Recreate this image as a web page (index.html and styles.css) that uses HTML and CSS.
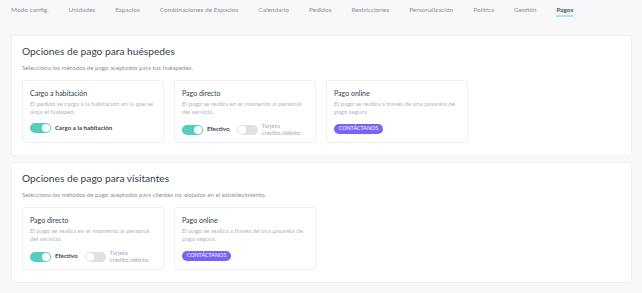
FILE: index.html
```html
<!DOCTYPE html>
<html lang="es">
<head>
<meta charset="utf-8">
<link rel="stylesheet" href="styles.css">
</head>
<body>
<nav class="tabs">
  <a class="tab">Modo config.</a>
  <a class="tab">Unidades</a>
  <a class="tab">Espacios</a>
  <a class="tab">Combinaciones de Espacios</a>
  <a class="tab">Calendario</a>
  <a class="tab">Pedidos</a>
  <a class="tab">Restricciones</a>
  <a class="tab">Personalización</a>
  <a class="tab">Política</a>
  <a class="tab">Gestión</a>
  <a class="tab active">Pagos</a>
</nav>
<main class="content">
  <section class="panel">
    <h2 class="panel-title">Opciones de pago para huéspedes</h2>
    <p class="panel-sub">Selecciona los métodos de pago aceptados para tus huéspedes.</p>
    <div class="cards">
      <div class="card">
        <h3 class="card-title">Cargo a habitación</h3>
        <p class="card-desc">El pedido se carga a la habitación en la que se aloja el huésped.</p>
        <div class="options">
          <div class="opt"><span class="toggle on"></span><span class="opt-label">Cargo a la habitación</span></div>
        </div>
      </div>
      <div class="card">
        <h3 class="card-title">Pago directo</h3>
        <p class="card-desc">El pago se realiza en el momento al personal del servicio.</p>
        <div class="options">
          <div class="opt"><span class="toggle on"></span><span class="opt-label">Efectivo</span></div>
          <div class="opt"><span class="toggle"></span><span class="opt-label off">Tarjeta<br>crédito/débito</span></div>
        </div>
      </div>
      <div class="card">
        <h3 class="card-title">Pago online</h3>
        <p class="card-desc">El pago se realiza a través de una pasarela de pago segura.</p>
        <div class="options">
          <button class="btn">CONTÁCTANOS</button>
        </div>
      </div>
    </div>
  </section>
  <section class="panel">
    <h2 class="panel-title">Opciones de pago para visitantes</h2>
    <p class="panel-sub">Selecciona los métodos de pago aceptados para clientes no alojados en el establecimiento.</p>
    <div class="cards">
      <div class="card">
        <h3 class="card-title">Pago directo</h3>
        <p class="card-desc">El pago se realiza en el momento al personal del servicio.</p>
        <div class="options">
          <div class="opt"><span class="toggle on"></span><span class="opt-label">Efectivo</span></div>
          <div class="opt"><span class="toggle"></span><span class="opt-label off">Tarjeta<br>crédito/débito</span></div>
        </div>
      </div>
      <div class="card">
        <h3 class="card-title">Pago online</h3>
        <p class="card-desc">El pago se realiza a través de una pasarela de pago segura.</p>
        <div class="options">
          <button class="btn">CONTÁCTANOS</button>
        </div>
      </div>
    </div>
  </section>
</main>
</body>
</html>
```
FILE: styles.css
```css
* { box-sizing: border-box; }
html, body { margin: 0; padding: 0; }
body {
  background: #f7f8fa;
  font-family: Lato, "Noto Sans", sans-serif;
  color: #3d4455;
  width: 642px;
  height: 293px;
  overflow: hidden;
}
.tabs {
  display: flex;
  gap: 20px;
  padding: 5px 11px 0;
  height: 35px;
}
.tab {
  font-size: 6.5px;
  color: #8b90a0;
  line-height: 8px;
  height: 12px;
  padding-top: 1px;
  white-space: nowrap;
}
.tab.active {
  color: #3d4455;
  font-weight: 600;
  border-bottom: 2px solid #a6ebea;
}
.content {
  display: flex;
  flex-direction: column;
  gap: 6px;
  padding: 0 10px 0 11px;
}
.panel {
  background: #fff;
  border: 1px solid #f0f1f4;
  border-radius: 2px;
  padding: 8px 10px 0;
  height: 121px;
}
.panel-title {
  margin: 0;
  font-size: 10.2px;
  font-weight: 400;
  line-height: 14px;
  color: #363d4e;
}
.panel-sub {
  margin: 5px 0 0;
  font-size: 6.2px;
  line-height: 9px;
  color: #8b90a0;
}
.cards {
  display: flex;
  gap: 10px;
  margin-top: 8px;
}
.card {
  width: 142px;
  height: 63px;
  border: 1px solid #eef0f3;
  border-radius: 3px;
  padding: 7px 7px 0;
}
.card-title {
  margin: 0;
  font-size: 7px;
  font-weight: 400;
  line-height: 10px;
  color: #363d4e;
}
.card-desc {
  margin: 2px 0 0;
  font-size: 6.2px;
  line-height: 8px;
  color: #b2b6c3;
}
.options {
  display: flex;
  align-items: center;
  gap: 7px;
  margin-top: 7px;
}
.opt {
  display: flex;
  align-items: center;
  gap: 4px;
}
.toggle {
  position: relative;
  width: 21px;
  height: 10px;
  border-radius: 5px;
  background: #dfe1e6;
  flex: none;
}
.toggle::after {
  content: "";
  position: absolute;
  top: 1px;
  left: 1px;
  width: 8px;
  height: 8px;
  border-radius: 50%;
  background: #fff;
}
.toggle.on { background: #55cfbd; }
.toggle.on::after { left: 12px; }
.opt-label {
  font-size: 6.2px;
  font-weight: 700;
  color: #3d4455;
  line-height: 6.5px;
}
.opt-label.off {
  font-weight: 400;
  color: #a7abb8;
}
.btn {
  border: 0;
  background: #7a62f5;
  color: #fff;
  font-family: inherit;
  font-size: 5.4px;
  line-height: 9.5px;
  height: 9.5px;
  width: 49px;
  padding: 0;
  border-radius: 5px;
  margin-top: 1px;
}
```
